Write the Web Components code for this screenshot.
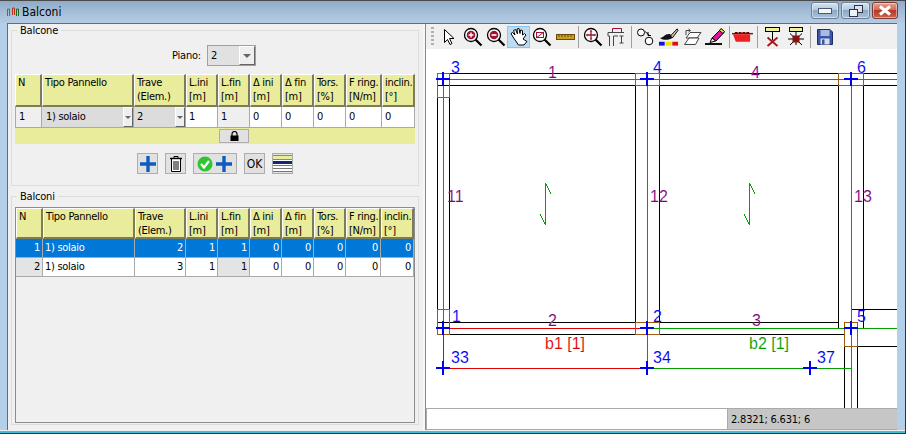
<!DOCTYPE html>
<html><head><meta charset="utf-8"><style>
html,body{margin:0;padding:0;width:906px;height:434px;overflow:hidden}
</style></head><body>
<app-window></app-window>
<script>
const FONT='"DejaVu Sans Condensed","DejaVu Sans",sans-serif';
function def(name,css,html){
  customElements.define(name,class extends HTMLElement{
    constructor(){super();const r=this.attachShadow({mode:'open'});
      r.innerHTML='<style>'+css+'</style>'+(typeof html==='function'?html(this):html);}
  });
}
const COLS1='27px 92px 52px 32px 32px 32px 32px 32px 36px 33px';
const COLS2='27px 92px 51px 32px 32px 32px 32px 32px 35px 33px';
const HEAD=['N','Tipo Pannello','Trave<br>(Elem.)','L.ini<br>[m]','L.fin<br>[m]','Δ ini<br>[m]','Δ fin<br>[m]','Tors.<br>[%]','F ring.<br>[N/m]','inclin.<br>[°]'];

def('win-btn',`:host{display:flex;align-items:center;justify-content:center;height:17px;box-sizing:border-box;border:1px solid #6b7f96;border-radius:3px;background:linear-gradient(#d5e2f0,#b5c9de 45%,#8ea9c6 50%,#a9c2da);box-shadow:inset 0 0 0 1px rgba(255,255,255,.45)}
:host([close]){background:linear-gradient(#e9a191,#cf6a58 45%,#b53a28 50%,#c9624f);border-color:#7d3a30}`,`<slot></slot>`);

def('title-bar',`:host{display:flex;align-items:center;height:23px;box-sizing:border-box;border-top:1px solid #4a4a4a;padding:0 7px 0 6px;background:linear-gradient(#8fabc8,#a5bed8 50%,#b4cbe2);font:12px ${FONT};color:#000}
.t{margin-left:3px;font-size:12px}
.b{margin-left:auto;display:grid;grid-template-columns:28px 29px 26px;gap:2px;margin-top:-3px}`,
`<svg width="13" height="12" viewBox="0 0 13 12"><path d="M1.500 10V3H3.500V10" fill="none" stroke="#1a9a2a"/><path d="M6.500 9V2H8.500V9" fill="none" stroke="#b03020"/><path d="M10.500 10V3H12.500V10" fill="none" stroke="#1a6a2a"/></svg>
<span class="t">Balconi</span>
<div class="b">
<win-btn><svg width="14" height="6"><rect x=".5" y=".5" width="13" height="5" fill="#f4f6f8" stroke="#4c5c70"/></svg></win-btn>
<win-btn><svg width="14" height="12"><rect x="5.500" y=".5" width="8" height="7" fill="#d8e4f0" stroke="#334"/><rect x=".5" y="4.500" width="8" height="7" fill="#eef3f8" stroke="#334"/></svg></win-btn>
<win-btn close><svg width="14" height="11"><path d="M2 1.500L12 9.500M12 1.500L2 9.500" stroke="#fff" stroke-width="3"/></svg></win-btn>
</div>`);

def('group-box',`:host{display:block}
fieldset{margin:0;height:100%;box-sizing:border-box;border:1px solid #dcdcdc;padding:0 3px 1px 3px;min-width:0}
legend{padding:0 3px;margin-left:2px;font-size:11px;letter-spacing:-.2px;line-height:13px;height:13px}`,
(h)=>`<fieldset><legend>${h.getAttribute('label')}</legend><slot></slot></fieldset>`);

def('combo-box',`:host{display:grid;grid-template-columns:1fr var(--aw,16px);box-sizing:border-box;border:1px solid #a0a0a0;background:#e1e1e1;align-items:stretch;font-size:11px}
.v{padding-left:var(--pl,3px);display:flex;align-items:center}
.a{background:#efefef;border-left:1px solid #fff;border-top:1px solid #fff;border-right:1px solid #666;border-bottom:1px solid #666;display:flex;align-items:center;justify-content:center}
.a i{border:var(--ah,4px) solid transparent;border-top:var(--ah,4px) solid #666;border-bottom:0;display:block}`,
`<div class="v"><slot></slot></div><div class="a"><i></i></div>`);

def('data-grid',`:host{display:block;font-size:11px;line-height:14px;letter-spacing:-.3px}
.g{display:grid;grid-template-columns:var(--cols)}
.h{background:#e9ec9b;box-sizing:border-box;height:var(--hh,33px);padding:1px 0 0 2px;border-top:1px solid #fff;border-left:1px solid #fff;border-right:2px solid #7c7c58;border-bottom:2px solid #7c7c58;white-space:nowrap;overflow:hidden}
.c{box-sizing:border-box;height:var(--rh,20px);background:#fff;border-right:1px solid #aaa;border-bottom:1px solid #aaa;padding:0 3px;display:flex;align-items:center;white-space:nowrap}
.c:nth-child(10n+1){border-left:var(--lb,1px solid #aaa)}
.g.right .c{justify-content:flex-end;padding:0 2px}
.g.right .c.l{justify-content:flex-start}
.c.gr{background:#efefef}.c.gd{background:#e4e4e4}
.c.sel{background:#0078d7;color:#fff}
.c.cb{padding:0}
`,(h)=>{
  const cols=h.getAttribute('cols');
  const rows=JSON.parse(h.getAttribute('rows'));
  let s=`<div class="g ${h.hasAttribute('right')?'right':''}" style="--cols:${cols}">`;
  HEAD.forEach(t=>s+=`<div class="h">${t}</div>`);
  rows.forEach(r=>r.forEach(c=>{
    const cls=c.c||'', txt=c.t;
    if(c.combo) s+=`<div class="c cb"><combo-box style="width:100%;height:100%;--pl:${c.pl}px;--aw:10px;--ah:3px;border:0;background:#dcdcdc">${txt}</combo-box></div>`;
    else s+=`<div class="c ${cls}">${txt}</div>`;
  }));
  return s+'</div>';
});

def('icon-button',`:host{display:flex;align-items:center;justify-content:center;height:21px;width:var(--w,21px);box-sizing:border-box;border:1px solid #adadad;background:#e1e1e1;font-size:12px}`,`<slot></slot>`);

def('lock-strip',`:host{display:flex;justify-content:center;height:16px;background:#e9ec9b;padding-left:38px}
.l{width:30px;height:14px;margin-top:1px;box-sizing:border-box;border:1px solid #adadad;background:#e1e1e1;display:flex;align-items:center;justify-content:center}`,
`<div class="l"><svg width="9" height="10" viewBox="0 0 9 10"><path d="M2 5V3a2.500 2.500 0 0 1 5 0V5" fill="none" stroke="#000" stroke-width="1.200"/><rect x="0.500" y="4.500" width="8" height="5.500"/></svg></div>`);

def('edit-group',`:host{display:flex;flex-direction:column;height:100%}
.p{display:flex;justify-content:center;align-items:center;gap:6px;height:21px;margin:8px 0 8px;font-size:11px;letter-spacing:-.2px;padding-right:2px}
combo-box{width:49px;height:21px}
.b{display:flex;justify-content:center;gap:7px;margin-top:9px}
`,`<div class="p"><span>Piano:</span><combo-box style="--pl:3px">2</combo-box></div>
<data-grid cols="${COLS1}" rows='${JSON.stringify([[{t:'1',c:'gr'},{t:'1) solaio',combo:1,pl:4},{t:'2',combo:1,pl:3},{t:'1'},{t:'1',c:'gr'},{t:'0'},{t:'0'},{t:'0'},{t:'0'},{t:'0'}]])}' style="--rh:21px"></data-grid>
<lock-strip></lock-strip>
<div class="b">
<icon-button><svg width="16" height="16"><path d="M8 0V16M0 8H16" stroke="#0f5cc0" stroke-width="3.400"/></svg></icon-button>
<icon-button><svg width="14" height="17" viewBox="0 0 14 17" fill="#fff" stroke="#000"><path d="M5 3V1.500H9V3" fill="none"/><path d="M2.500 3.500V16.500H11.500V3.500Z"/><path d="M1 3.500H13" stroke-width="1.400"/><path d="M5 6V15M7 6V15M9 6V15" fill="none"/></svg></icon-button>
<icon-button style="--w:44px"><svg width="36" height="16" viewBox="0 0 36 16"><circle cx="8" cy="8" r="7.500" fill="#2ec52e"/><path d="M4 8L7 11.500L12 5" fill="none" stroke="#fff" stroke-width="2.200"/><path d="M27 0V16M19 8H35" stroke="#0f5cc0" stroke-width="3.400"/></svg></icon-button>
<icon-button>OK</icon-button>
<icon-button><svg width="19" height="17"><rect width="19" height="17" fill="#fff"/><rect y="0" width="19" height="1" fill="#888"/><rect y="1" width="19" height="3" fill="#e9ec9b"/><rect y="4" width="19" height="1" fill="#888"/><rect y="6" width="19" height="3" fill="#0e2a72"/><rect y="10" width="19" height="1" fill="#777"/><rect y="13" width="19" height="1" fill="#777"/><rect y="16" width="19" height="1" fill="#777"/></svg></icon-button>
</div>`);

def('list-group',`:host{display:flex;flex-direction:column;height:100%;box-sizing:border-box;padding-top:4px}
.w{flex:1;border:1px solid #8c8c8c;background:#f0f0f0;box-sizing:border-box}
`,`<div class="w"><data-grid right cols="${COLS2}" rows='${JSON.stringify([
 ['1','1) solaio','2','1','1','0','0','0','0','0'].map((t,i)=>({t,c:'sel'+(i==1?' l':'')})),
 ['2','1) solaio','3','1','1','0','0','0','0','0'].map((t,i)=>({t,c:(i==0||i==4?'gd':'')+(i==1?' l':'')}))
])}' style="--hh:31px;--rh:19px;--lb:0"></data-grid></div>`);

def('tool-btn',`:host{display:flex;align-items:center;justify-content:center;width:23px;height:22px;box-sizing:border-box;border:1px solid transparent;flex:none}
:host([on]){background:#bcdcf4;border-color:#8cc6f0}`,`<slot></slot>`);
def('tool-sep',`:host{display:block;width:1px;height:22px;background:#a0a0a0;flex:none}`,``);

const lens=(inner)=>`<svg width="20" height="20" viewBox="0 0 20 20"><path d="M12.500 12.500L18.500 18.500" stroke="#000" stroke-width="2.200"/><circle cx="8" cy="8" r="6.500" fill="#fff" stroke="#000" stroke-width="1.300"/>${inner}</svg>`;
def('tool-bar',`:host{display:flex;align-items:center;height:25px;background:#f0f0f0;padding-left:5px;box-sizing:border-box}
.grip{width:3px;height:20px;margin-right:3px;background:repeating-linear-gradient(#b0b0b0 0 2px,transparent 2px 4px)}`,
`<div class="grip"></div>
<tool-btn><svg width="14" height="18" viewBox="0 0 14 18"><path d="M2.500 1.500V14.500L5.500 11.500L8 16.500L10 15.500L7.500 10.500H12Z" fill="#fff" stroke="#000"/></svg></tool-btn>
<tool-btn style="margin-left:1px">${lens('<circle cx="8" cy="8" r="4.300" fill="#a01030"/><path d="M8 5.500V10.500M5.500 8H10.500" stroke="#fff" stroke-width="1.400"/>')}</tool-btn>
<tool-btn>${lens('<circle cx="8" cy="8" r="4.300" fill="#a01030"/><path d="M5.500 8H10.500" stroke="#fff" stroke-width="1.600"/>')}</tool-btn>
<tool-btn on><svg width="20" height="20" viewBox="0 0 20 20"><path d="M4 10L2 6.500L3.500 5.500L6 8L4.500 3.500L6.500 2.500L8.500 7L8 2L10 1.500L11 6.500L11.500 3L13.500 3.500L13.500 8L15.500 6.500L17 8L14 12L18 14.500L15 18H9.500Z" fill="#fff" stroke="#000"/></svg></tool-btn>
<tool-btn>${lens('<rect x="4.500" y="5.500" width="7" height="5" fill="none" stroke="#a01030"/><path d="M4 11L12 5" stroke="#a01030"/>')}</tool-btn>
<tool-btn style="margin-left:1px"><svg width="19" height="6"><rect x=".5" y=".5" width="18" height="5" fill="#c8a020" stroke="#6a4a10"/><path d="M3 .5V3M6 .5V3M9 .5V3M12 .5V3M15 .5V3" stroke="#6a4a10"/></svg></tool-btn>
<tool-sep style="margin:0 2px 0 1px"></tool-sep>
<tool-btn>${lens('<path d="M8 3.500V12.500M3.500 8H12.500" stroke="#a01030" stroke-width="1.300"/><path d="M6.500 4.500H9.500L8 3ZM6.500 11.500H9.500L8 13ZM4.500 6.500V9.500L3 8ZM11.500 6.500V9.500L13 8Z" fill="#a01030"/>')}</tool-btn>
<tool-btn style="margin-left:1px"><svg width="19" height="20" viewBox="0 0 19 20" fill="none"><path d="M5.500 5.500V1.500H14.500V5.500" stroke="#a01030"/><path d="M2.500 19V9M2.500 9L1 9V5.500H17M6.500 19V9H11M14.500 9V16M12.500 9H16.500M12.500 16H16.500" stroke="#444"/></svg></tool-btn>
<tool-sep style="margin:0 2px 0 3px"></tool-sep>
<tool-btn><svg width="20" height="18" viewBox="0 0 20 18" fill="none" stroke="#000"><circle cx="5" cy="4.500" r="3.500" fill="#fff"/><circle cx="13" cy="13" r="3.800" fill="#fff"/><path d="M9 3.500L13.500 7.500M12 4V7.500H15" /></svg></tool-btn>
<tool-btn><svg width="22" height="20" viewBox="0 0 22 20"><path d="M13 9L20 1.500L21 3L15 11Z" fill="#d8c8a0" stroke="#000"/><path d="M2 11C6 11 7 6 13 7L15 11C12 13 6 14 2 11Z" fill="#111"/><rect x="1" y="15" width="6" height="4" fill="#1010e0"/><rect x="8" y="15" width="6" height="4" fill="#f0e000"/><rect x="15" y="15" width="6" height="4" fill="#e01010"/></svg></tool-btn>
<tool-btn style="margin-left:1px"><svg width="20" height="18" viewBox="0 0 20 18" fill="#fff" stroke="#444"><path d="M7 4.500H18L14 10H3Z"/><path d="M6 10H16L12.500 16.500H1.500Z"/><path d="M3 7V2.500H7M5.500 1L7.500 2.500L5.500 4" fill="none"/></svg></tool-btn>
<tool-btn><svg width="21" height="19" viewBox="0 0 21 19"><path d="M7 11L15.500 2.500L19 5.500L11 14Z" fill="#e0149c" stroke="#000"/><path d="M14.500 3.500L16 1.500L19.500 4.500L18 6.500Z" fill="#f0e040" stroke="#000"/><path d="M7 11L5 15.500L10.500 14Z" fill="#eee" stroke="#000"/><rect x="0" y="16" width="17" height="2" fill="#111"/></svg></tool-btn>
<tool-sep style="margin:0 1px 0 2px"></tool-sep>
<tool-btn><svg width="22" height="12" viewBox="0 0 22 12"><path d="M0 2.500H22" stroke="#333" stroke-width="1.500"/><path d="M1 3H19V11H4Z" fill="#f02020"/><path d="M3 1.500H18" stroke="#600" stroke-width="1.500" stroke-dasharray="3 1"/></svg></tool-btn>
<tool-sep style="margin:0 3px 0 3px"></tool-sep>
<tool-btn><svg width="15" height="20" viewBox="0 0 15 20"><rect x=".5" y=".5" width="14" height="4" fill="#eef09a" stroke="#000"/><path d="M7.500 5V13" stroke="#000"/><path d="M2.500 10.500L12.500 19M12.500 10.500L2.500 19" stroke="#a01818" stroke-width="1.800"/></svg></tool-btn>
<tool-btn><svg width="18" height="20" viewBox="0 0 18 20"><rect x="2.500" y=".5" width="13" height="4" fill="#eef09a" stroke="#000"/><path d="M9 5V18M1 12H17M3 6.500L15 18M15 6.500L3 18" stroke="#000"/><rect x="5.500" y="8.500" width="7" height="7" fill="#8a1010"/></svg></tool-btn>
<tool-sep style="margin:0 2px 0 3px"></tool-sep>
<tool-btn><svg width="16" height="16" viewBox="0 0 16 16"><path d="M.5.500H13L15.500 3V15.500H.5Z" fill="#3a56a8" stroke="#1c2c68"/><rect x="3.500" y="1" width="9" height="6" fill="#a8bce0"/><rect x="3.500" y="9.500" width="9" height="6" fill="#d8dde8"/><rect x="5" y="10.500" width="2.500" height="5" fill="#3a56a8"/></svg></tool-btn>`);

/* ---- plan drawing ---- */
const BK='#000',GR='#00a000',RD='#e00000',BR='#a05a10',BL='#0000f0',PU='#800080';
const L=(a,b,c,d,col)=>`<path d="M${a+.5} ${b+.5}L${c+.5} ${d+.5}" stroke="${col}" stroke-width="1"/>`;
const BX=(a,b,c,d)=>`<rect x="${a+.5}" y="${b+.5}" width="${c-a}" height="${d-b}" fill="none" stroke="${BR}"/>`;
const CR=(x,y)=>`<path d="M${x-7} ${y}H${x+7}M${x} ${y-7}V${y+7}" stroke="${BL}" stroke-width="2"/>`;
const T=(x,y,s,c)=>`<text x="${x}" y="${y}" fill="${c}">${s}</text>`;
let d='';
[[437,73,897,73],[437,85,897,85],[437,322,838,322],[437,334,844,334],
 [437,85,437,334],[449,85,449,334],[635,85,635,334],[659,85,659,334],[838,85,838,328],[863,85,863,328],[838,328,863,328],
 [844,328,844,408],[857,334,857,408],[851,309,897,309],[851,309,851,322],[857,346,897,346]
].forEach(a=>d+=L(...a,BK));
[[443,79,897,79],[443,79,443,328],[647,79,647,368],[851,79,851,408],[647,328,897,328],[647,368,851,368]].forEach(a=>d+=L(...a,GR));
[[443,328,647,328],[443,328,443,368],[443,368,647,368]].forEach(a=>d+=L(...a,RD));
[[437,73,449,97],[635,73,659,85],[838,73,863,85],[437,309,449,334],[635,322,659,334],[844,322,857,346]].forEach(a=>d+=BX(...a));
[545,749].forEach(x=>{d+=`<path d="M${x+.5} 183.500V224.500L${x-5} 214M${x+.5} 183.500L${x+6} 194" fill="none" stroke="${GR}"/>`;});
[[443,79],[647,79],[851,79],[443,328],[647,328],[851,328],[443,368],[647,368],[810,368]].forEach(a=>d+=CR(...a));
let tx='';
[[451,73,'3'],[653,73,'4'],[857,73,'6'],[452,322,'1'],[653,322,'2'],[857,322,'5'],[451,363,'33'],[653,363,'34'],[817,363,'37']].forEach(a=>tx+=T(...a,BL));
[[548,78,'1'],[751,78,'4'],[548,326,'2'],[752,326,'3'],[447,202,'11'],[650,202,'12'],[854,202,'13']].forEach(a=>tx+=T(...a,PU));
tx+=T(545,349,'b1 [1]',RD)+T(749,349,'b2 [1]',GR);

def('plan-canvas',`:host{display:block;background:#fff;overflow:hidden;min-height:0}
svg{display:block}text{font:16px "Liberation Sans",sans-serif;stroke:#fff;stroke-width:.1px}`,
`<svg width="471" height="359" viewBox="426 49 471 359" shape-rendering="crispEdges">${d}<g shape-rendering="auto">${tx}</g></svg>`);

def('status-bar',`:host{display:grid;grid-template-columns:301px 1fr;height:22px;box-sizing:border-box;border-top:1px solid #aaa;border-bottom:1px solid #aaa;background:#fff;font-size:11px;letter-spacing:-.2px}
.a{border-left:1px solid #aaa;background:#fff}
.b{background:#c6c6c6;border-left:1px solid #aaa;padding-left:3px;display:flex;align-items:center}`,
`<div class="a"></div><div class="b"><slot></slot></div>`);

def('left-panel',`:host{display:flex;flex-direction:column;padding:0 4px 0 3px;box-sizing:border-box;background:#f0f0f0}
.a{height:162px}.b{height:235px;margin-top:4px}`,
`<group-box class="a" label="Balcone"><edit-group></edit-group></group-box>
<group-box class="b" label="Balconi"><list-group></list-group></group-box>`);

def('right-panel',`:host{display:grid;grid-template-rows:25px 359px 22px;background:#f0f0f0;border-left:1px solid #8a8a8a}`,
`<tool-bar></tool-bar><plan-canvas></plan-canvas><status-bar>2.8321; 6.631; 6</status-bar>`);

def('app-window',`:host{display:grid;grid-template-rows:23px 407px 1fr;width:906px;height:434px;background:#b4cfe9;font:11px ${FONT};color:#000;border-right:1px solid #333;box-sizing:border-box}
.m{display:grid;grid-template-columns:415px 2px 472px;margin:0 8px 0 7px;border-top:1px solid #6a6a6a;border-left:1px solid #6a6a6a;background:#f0f0f0}
.sp{background:#f7f7f7}
.f{background:linear-gradient(#f0f0f0 0 1px,#46bcd4 1px 3px,#2a3a44 3px)}`,
`<title-bar></title-bar>
<div class="m"><left-panel></left-panel><div class="sp"></div><right-panel></right-panel></div>
<div class="f"></div>`);
</script>
</body></html>
